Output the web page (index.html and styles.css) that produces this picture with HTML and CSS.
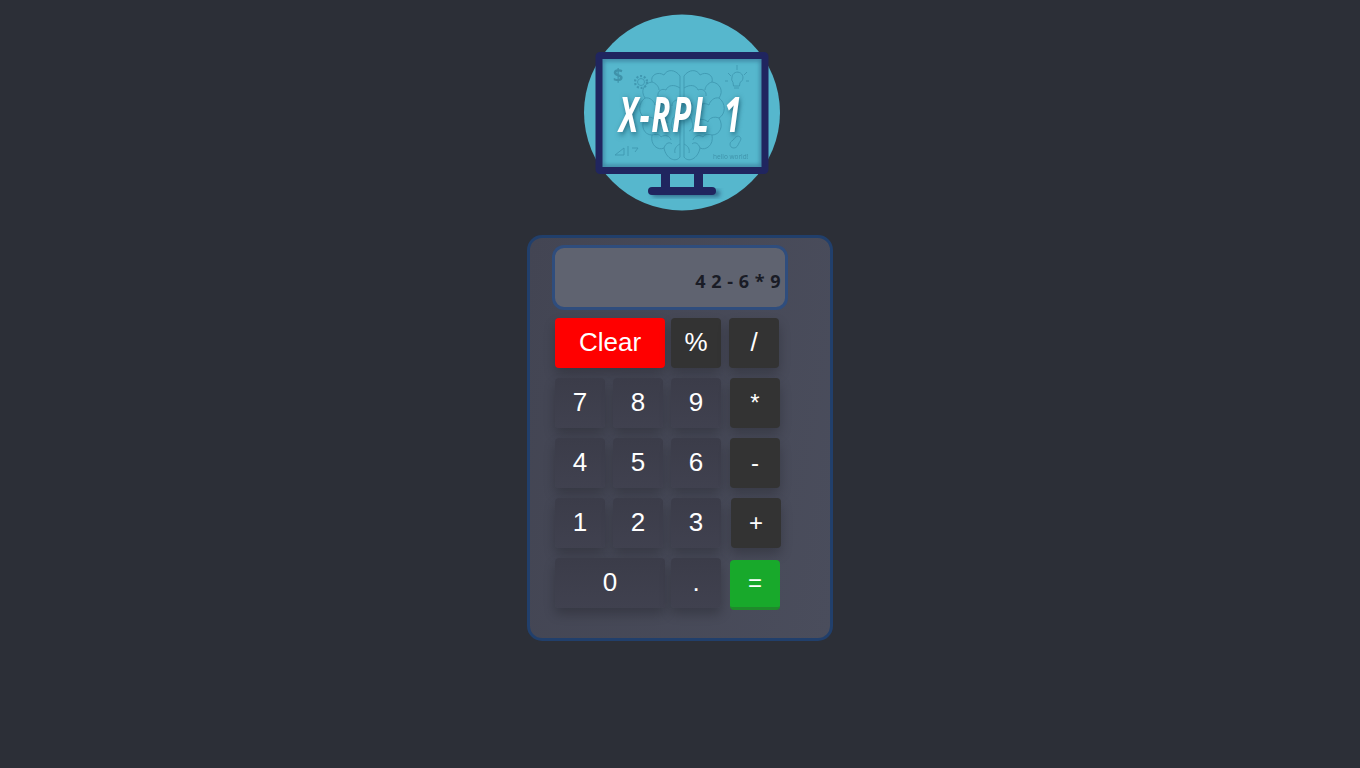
FILE: index.html
```html
<!DOCTYPE html>
<html lang="en">
<head>
  <meta charset="UTF-8">
  <meta name="viewport" content="width=device-width, initial-scale=1.0">
  <title>Kalkulator X-RPL 1</title>
  <link rel="stylesheet" href="styles.css">
</head>
<body>
  <svg class="logo" viewBox="0 0 200 200" width="200" height="200" aria-label="X-RPL 1">
    <defs>
      <filter id="soft" x="-20%" y="-20%" width="140%" height="140%">
        <feGaussianBlur stdDeviation="2"/>
      </filter>
      <g id="lobe">
        <path d="M98 64C93 57 85 57 82 63C76 59 68 63 70 70C62 71 58 79 63 86C56 91 56 102 63 106C58 114 62 123 70 123C68 133 76 139 82 136C84 147 94 151 98 145Z"/>
        <path d="M98 76C92 72 86 73 84 78C80 76 75 79 76 84M70 70C74 71 77 75 77 78M63 86C68 85 72 89 73 93C78 90 84 92 85 97M98 88C93 87 90 90 90 94M63 106C68 104 73 106 74 110C78 106 84 107 86 111M98 104C93 103 90 106 90 110C88 114 90 118 93 119M70 123C74 122 78 122 79 125C83 122 88 124 89 128M82 136C84 130 88 130 90 132M98 132C94 134 92 137 93 141"/>
      </g>
    </defs>
    <circle class="disc" cx="100" cy="100.5" r="98"/>
    <g class="doodle">
      <use href="#lobe"/>
      <use href="#lobe" transform="translate(200 0) scale(-1 1)"/>
      <circle cx="59" cy="70" r="3.5"/>
      <circle class="gear" cx="59" cy="70" r="6"/>
      <path d="M150 65a5.500 5.500 0 1 1 8 5.500l-.5 3.500h-6l-.5-3.500a5.500 5.500 0 0 1-1-5.500zM152 76h5M146 61l3 3M155 53v5M165 60l-3 3M143 69h3M167 69h-3"/>
      <path d="M33 143l9-7v7zM46 134v10M50 136h6l-3 4"/>
      <path d="M148 132c0-3 3-3 4-5s4-4 6-2 0 4-1 6-2 5-5 5-4-2-4-4z"/>
    </g>
    <text class="dollar" x="31" y="70">$</text>
    <text class="hello" x="131" y="146.500">hello world!</text>
    <rect class="frame-shadow" x="20" y="47" width="160" height="108" filter="url(#soft)"/>
    <rect class="stand-shadow" x="70" y="178" width="68" height="7" rx="3" filter="url(#soft)"/>
    <g class="monitor">
      <rect class="stand" x="79" y="160" width="9" height="16"/>
      <rect class="stand" x="112" y="160" width="9" height="16"/>
      <rect class="stand" x="66" y="175" width="68" height="8" rx="4"/>
      <rect class="frame" x="17" y="43.500" width="166" height="115" rx="1"/>
    </g>
    <text class="title" transform="translate(37 119.500) scale(.64 1)">X-RPL 1</text>
  </svg>

  <main class="calc">
    <input class="display" type="text" value="4 2 - 6 * 9" readonly>
    <div class="row">
      <button class="key wide clear">Clear</button>
      <button class="key op">%</button>
      <button class="key op">/</button>
    </div>
    <div class="row">
      <button class="key">7</button>
      <button class="key">8</button>
      <button class="key">9</button>
      <button class="key op small shift">*</button>
    </div>
    <div class="row">
      <button class="key">4</button>
      <button class="key">5</button>
      <button class="key">6</button>
      <button class="key op small shift">-</button>
    </div>
    <div class="row">
      <button class="key">1</button>
      <button class="key">2</button>
      <button class="key">3</button>
      <button class="key op small plus">+</button>
    </div>
    <div class="row">
      <button class="key wide zero">0</button>
      <button class="key">.</button>
      <button class="key small shift equals">=</button>
    </div>
  </main>
</body>
</html>
```

FILE: styles.css
```css
body {
  margin: 0;
  min-height: 768px;
  background: #2c2f37;
  font-family: "Liberation Sans", Arial, sans-serif;
  display: flex;
  flex-direction: column;
  align-items: center;
}

/* logo */
.logo {
  display: block;
  margin: 12px 0 0 3px;
  filter: blur(.4px);
}
.disc {
  fill: #56b7cd;
}
.doodle {
  fill: none;
  stroke: #4098b1;
  stroke-width: .9;
}
.gear {
  stroke-width: 2.200;
  stroke-dasharray: 2 1.800;
}
.dollar {
  font: bold 18px "Open Sans", sans-serif;
  fill: #3f93aa;
}
.hello {
  font: 6.500px "Open Sans", sans-serif;
  fill: #3f93aa;
}
.frame-shadow {
  fill: none;
  stroke: #1c3f66;
  stroke-width: 4;
  opacity: .45;
}
.stand-shadow {
  fill: #1c3f66;
  opacity: .6;
}
.frame {
  fill: none;
  stroke: #20255f;
  stroke-width: 7;
}
.stand {
  fill: #20255f;
}
.title {
  font: italic bold 49px "Open Sans", sans-serif;
  letter-spacing: 2.500px;
  word-spacing: 6px;
  fill: #fff;
  filter: drop-shadow(2px 2px 3px rgba(22, 86, 108, .8));
}

/* calculator */
.calc {
  box-sizing: border-box;
  width: 306px;
  height: 406px;
  margin: 23px 0 0;
  padding: 7px 0 0 22px;
  background: linear-gradient(100deg, #434553, #4a4d5c);
  border: 3px solid #213f6b;
  border-radius: 15px;
}
.display {
  display: block;
  box-sizing: border-box;
  width: 236px;
  height: 65px;
  margin: 0 0 8px;
  padding: 7px 4px 0 0;
  background: #5f6370;
  border: 3px solid #2f4d7d;
  border-radius: 12px;
  color: #1a1c26;
  font: bold 18px "Open Sans", sans-serif;
  letter-spacing: .5px;
  text-align: right;
  outline: none;
}
.row {
  display: flex;
  gap: 8px;
  margin: 0 0 10px 3px;
}
.key {
  width: 50px;
  height: 50px;
  padding: 0 0 1px;
  background: linear-gradient(#3b3c49, #40414f);
  border: none;
  border-radius: 4px;
  box-shadow: 0 6px 12px rgba(0, 0, 0, .22);
  color: #fff;
  font: 26px "Liberation Sans", Arial, sans-serif;
}
.wide {
  width: 110px;
}
.clear,
.zero {
  margin-right: -2px;
}
.clear {
  background: #f00;
}
.op {
  background: #333;
}
.small {
  font-size: 24px;
}
.shift {
  margin-left: 1px;
}
.plus {
  margin-left: 2px;
}
.equals {
  margin-top: 2px;
  background: #18a92b;
  border-bottom: 3px solid #1f8a2b;
  box-shadow: none;
}
```
